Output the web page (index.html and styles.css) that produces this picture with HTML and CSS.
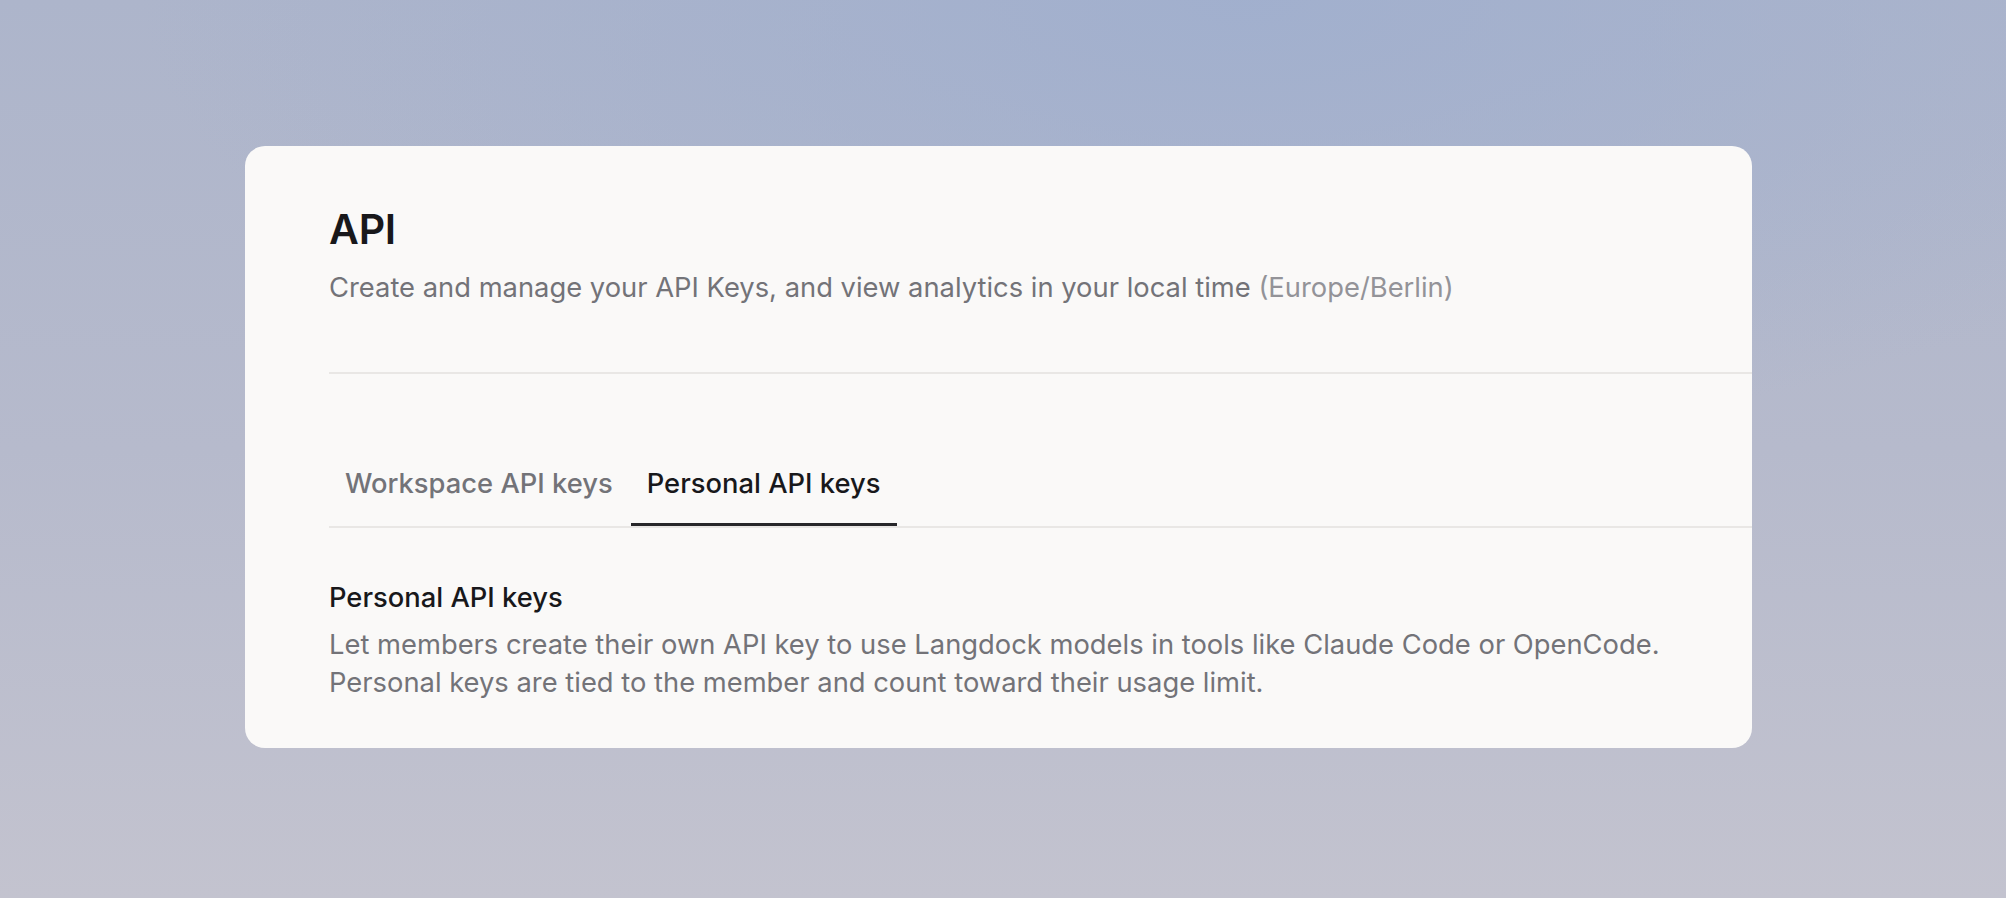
FILE: index.html
```html
<!DOCTYPE html>
<html lang="en">
<head>
    <meta charset="UTF-8">
    <title>API - Settings</title>
    <link rel="stylesheet" href="styles.css">
</head>

<body>

<div class="stage">
    <div class="card">

        <div class="header">
            <h1>API</h1>
            <p class="subtitle">Create and manage your API Keys, and view analytics in your local time <span class="tz">(Europe/Berlin)</span></p>
        </div>

        <div class="tabs">
            <button class="tab">Workspace API keys</button>
            <button class="tab active">Personal API keys</button>
        </div>

        <div class="section">
            <h2>Personal API keys</h2>
            <p>Let members create their own API key to use Langdock models in tools like Claude Code or OpenCode. Personal keys are tied to the member and count toward their usage limit.</p>
        </div>

    </div>
</div>

</body>
</html>
```

FILE: styles.css
```css
body {
    margin: 0;
    font-family: Inter, "Noto Sans", sans-serif;
    background:
        radial-gradient(ellipse 55% 50% at 62% 0%, rgba(160, 175, 206, 0.9), rgba(160, 175, 206, 0) 100%),
        linear-gradient(180deg, #adb5cb 0%, #b6bacc 50%, #c3c3cf 100%);
    min-height: 898px;
}
.stage {
    height: 898px;
    display: flex;
    align-items: center;
    justify-content: center;
    padding-right: 9px;
    padding-bottom: 5px;
    box-sizing: border-box;
}
.card {
    width: 1507px;
    background-color: #faf9f8;
    border-radius: 20px;
    padding: 59px 0 46px 84px;
    box-sizing: border-box;
    overflow: hidden;
}
.header {
    border-bottom: 2px solid #e9e7e5;
    padding-bottom: 66px;
}
h1 {
    margin: 0;
    font-size: 41px;
    line-height: 48px;
    font-weight: 600;
    color: #18181b;
    letter-spacing: -0.2px;
}
.subtitle {
    margin: 17px 0 0;
    font-size: 27.35px;
    line-height: 36px;
    color: #737378;
}
.tz {
    color: #939398;
}
.tabs {
    display: flex;
    gap: 2px;
    margin-top: 88px;
    border-bottom: 2px solid #e9e7e5;
}
.tab {
    font-family: inherit;
    font-size: 27.35px;
    line-height: 36px;
    font-weight: 500;
    color: #737378;
    background: none;
    border: none;
    padding: 4px 16px 21px;
    border-bottom: 3px solid transparent;
    cursor: pointer;
}
.tab.active {
    color: #18181b;
    border-bottom-color: #27272a;
}
.section {
    padding-top: 52px;
    padding-right: 60px;
}
h2 {
    margin: 0;
    font-size: 27.35px;
    line-height: 36px;
    font-weight: 500;
    color: #18181b;
}
.section p {
    margin: 10px 0 0;
    font-size: 27.35px;
    line-height: 38px;
    color: #737378;
    max-width: 1360px;
}
```
